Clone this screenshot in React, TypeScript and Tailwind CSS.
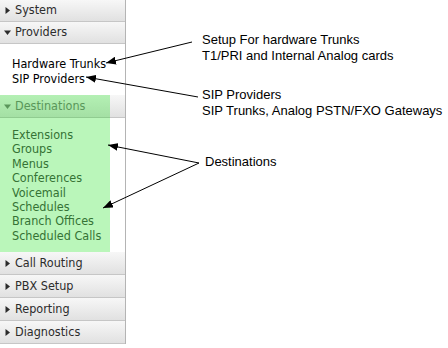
import type { ReactNode } from 'react';

const font = '"DejaVu Sans Condensed", "DejaVu Sans", sans-serif';

function Caret({ open, className }: Readonly<{ open?: boolean; className?: string }>) {
  return (
    <svg width="7" height="7" viewBox="0 0 7 7" className={className}>
      {open ? <path d="M0 1.5 H7 L3.5 6 Z" fill="currentColor" /> : <path d="M1.5 0 V7 L6 3.5 Z" fill="currentColor" />}
    </svg>
  );
}

function SectionHeader({
  label,
  open,
  tall,
  className = 'text-[#2c2c2c]',
}: Readonly<{ label: string; open?: boolean; tall?: boolean; className?: string }>) {
  return (
    <div
      className={`flex ${tall ? 'h-[23px]' : 'h-[22px]'} items-center gap-[4px] border-b border-[#c6c6c6] bg-gradient-to-b from-[#f7f7f7] to-[#e1e1e1] pl-[4px] text-[12.5px] ${className}`}
    >
      <Caret open={open} />
      <span>{label}</span>
    </div>
  );
}

function Callout({ className, children }: Readonly<{ className: string; children: ReactNode }>) {
  return (
    <div className={`absolute text-[13px] leading-[16px] text-black ${className}`} style={{ fontFamily: '"Liberation Sans", Arial, sans-serif' }}>
      {children}
    </div>
  );
}

const destinations = ['Extensions', 'Groups', 'Menus', 'Conferences', 'Voicemail', 'Schedules', 'Branch Offices', 'Scheduled Calls'];

export default function App() {
  return (
    <div className="relative h-[348px] w-[448px] overflow-hidden bg-white" style={{ fontFamily: font }}>
      <div className="flex w-[126px] flex-col border-r border-[#b4b4b4]">
        <SectionHeader label="System" />
        <SectionHeader label="Providers" open />
        <div className="h-[51px] pl-[12px] pt-[12px] text-[12.5px] leading-[15px] text-black">
          <div>Hardware Trunks</div>
          <div>SIP Providers</div>
        </div>
        <SectionHeader label="Destinations" open tall className="text-[#7c7c7c]" />
        <div className="h-[134px] pl-[12px] pt-[10px] text-[12.5px] leading-[14.4px] text-[#4a4a4a]">
          {destinations.map((d) => (
            <div key={d}>{d}</div>
          ))}
        </div>
        <SectionHeader label="Call Routing" tall />
        <SectionHeader label="PBX Setup" tall />
        <SectionHeader label="Reporting" tall />
        <SectionHeader label="Diagnostics" tall />
      </div>

      {/* green highlight over the Destinations section */}
      <div className="pointer-events-none absolute left-0 top-[95px] h-[157px] w-[110px] bg-[rgba(0,220,0,0.27)]" />

      <svg className="pointer-events-none absolute left-0 top-0" width="448" height="348">
        <defs>
          <marker id="head" viewBox="0 0 10 8" refX="10" refY="4" markerWidth="10" markerHeight="8" markerUnits="userSpaceOnUse" orient="auto">
            <path d="M0 0 L10 4 L0 8 Z" fill="#000" />
          </marker>
        </defs>
        <g stroke="#000" strokeWidth="1" fill="none">
          <line x1="192" y1="42" x2="106" y2="63" markerEnd="url(#head)" />
          <line x1="198" y1="97" x2="86" y2="77" markerEnd="url(#head)" />
          <line x1="199" y1="163" x2="108" y2="145" markerEnd="url(#head)" />
          <line x1="199" y1="163" x2="103" y2="208" markerEnd="url(#head)" />
        </g>
      </svg>

      <Callout className="left-[202px] top-[32px]">
        <div>Setup For hardware Trunks</div>
        <div>T1/PRI and Internal Analog cards</div>
      </Callout>
      <Callout className="left-[202px] top-[87px]">
        <div>SIP Providers</div>
        <div>SIP Trunks, Analog PSTN/FXO Gateways</div>
      </Callout>
      <Callout className="left-[205px] top-[154px]">
        <div>Destinations</div>
      </Callout>
    </div>
  );
}
